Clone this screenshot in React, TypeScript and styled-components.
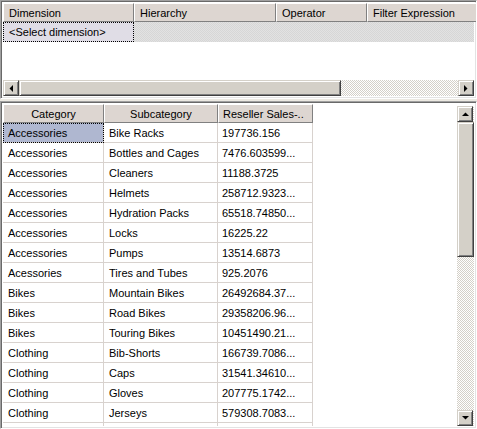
import React, { FC } from "react";
import styled, { createGlobalStyle } from "styled-components";

const GlobalStyle = createGlobalStyle`
  html, body {
    margin: 0;
    padding: 0;
    background: #d4d0c8;
  }
  body {
    font-family: "Liberation Sans", Arial, sans-serif;
    font-size: 11px;
    color: #000;
  }
`;

const dither = `repeating-conic-gradient(#d4d0c8 0 25%, #ffffff 0 50%) 0 0 / 2px 2px`;

const Screen = styled.div`
  width: 477px;
  height: 429px;
  display: flex;
  flex-direction: column;
  gap: 2px;
  background: #ece9e2;
  overflow: hidden;
`;

const Panel = styled.div<{ $height?: number }>`
  box-sizing: border-box;
  height: ${(p) => (p.$height ? `${p.$height}px` : "auto")};
  flex: ${(p) => (p.$height ? "none" : "1")};
  border: 1px solid #a0a0a0;
  border-right-color: #ffffff;
  border-bottom-color: #ffffff;
  box-shadow: inset 1px 1px 0 #696969, inset -1px -1px 0 #e3e3e3;
  padding: 2px;
  background: #fff;
  display: flex;
  flex-direction: column;
  overflow: hidden;
`;

const HeaderRow = styled.div`
  display: flex;
  flex: none;
  height: 19px;
`;

const HeaderCell = styled.div<{ $width: number; $center?: boolean; $pad?: number }>`
  box-sizing: border-box;
  width: ${(p) => p.$width}px;
  flex: none;
  height: 100%;
  background: #ddd6d1;
  border-top: 1px solid #fff;
  border-left: 1px solid #fff;
  border-right: 1px solid #808080;
  border-bottom: 1px solid #808080;
  padding: 0 ${(p) => p.$pad ?? 5}px;
  display: flex;
  align-items: center;
  justify-content: ${(p) => (p.$center ? "center" : "flex-start")};
  white-space: nowrap;
  overflow: hidden;
`;

const FilterRow = styled.div`
  display: flex;
  height: 20px;
  flex: none;
  background: repeating-conic-gradient(#d6d6d6 0 25%, #e2e2e2 0 50%) 0 0 / 2px 2px;
`;

const SelectCell = styled.div`
  box-sizing: border-box;
  width: 131px;
  height: 20px;
  background: #e0dde6;
  border: 1px dotted #000;
  padding: 0 5px;
  line-height: 18px;
`;

const Blank = styled.div`
  flex: 1;
`;

const HScroll = styled.div`
  display: flex;
  height: 16px;
  flex: none;
  background: ${dither};
`;

const ScrollButton = styled.div`
  box-sizing: border-box;
  width: 16px;
  height: 16px;
  flex: none;
  background: #d4d0c8;
  border-top: 1px solid #d4d0c8;
  border-left: 1px solid #d4d0c8;
  border-right: 1px solid #404040;
  border-bottom: 1px solid #404040;
  box-shadow: inset 1px 1px 0 #fff, inset -1px -1px 0 #808080;
  display: flex;
  align-items: center;
  justify-content: center;
`;

const Thumb = styled.div<{ $size: number; $vertical?: boolean }>`
  box-sizing: border-box;
  flex: none;
  width: ${(p) => (p.$vertical ? "100%" : `${p.$size}px`)};
  height: ${(p) => (p.$vertical ? `${p.$size}px` : "100%")};
  background: #d4d0c8;
  border-top: 1px solid #d4d0c8;
  border-left: 1px solid #d4d0c8;
  border-right: 1px solid #404040;
  border-bottom: 1px solid #404040;
  box-shadow: inset 1px 1px 0 #fff, inset -1px -1px 0 #808080;
`;

const Track = styled.div`
  flex: 1;
`;

const GridArea = styled.div`
  flex: 1;
  display: flex;
  overflow: hidden;
`;

const GridBody = styled.div`
  flex: 1;
  display: flex;
  flex-direction: column;
  overflow: hidden;
`;

const Row = styled.div`
  display: flex;
  flex: none;
  height: 20px;
`;

const Cell = styled.div<{ $width: number; $selected?: boolean; $pad?: number }>`
  box-sizing: border-box;
  width: ${(p) => p.$width}px;
  flex: none;
  height: 20px;
  padding: 0 ${(p) => p.$pad ?? 5}px;
  line-height: 20px;
  white-space: nowrap;
  overflow: hidden;
  border-right: 1px solid #d8d2ce;
  border-bottom: 1px solid #d8d2ce;
  background: ${(p) => (p.$selected ? "#afb7d0" : "#fff")};
  outline: ${(p) => (p.$selected ? "1px dotted #000" : "none")};
  outline-offset: -1px;
`;

const VScroll = styled.div`
  width: 17px;
  flex: none;
  display: flex;
  flex-direction: column;
  background: ${dither};
  margin-top: 2px;
`;

const Arrow: FC<{ dir: "left" | "right" | "up" | "down" }> = ({ dir }) => {
  const pts = {
    left: "4,0 4,7 0.5,3.5",
    right: "0,0 0,7 3.5,3.5",
    up: "0,4 7,4 3.5,0.5",
    down: "0,0 7,0 3.5,3.5",
  }[dir];
  const horiz = dir === "left" || dir === "right";
  return (
    <svg width={horiz ? 4 : 7} height={horiz ? 7 : 4} viewBox={horiz ? "0 0 4 7" : "0 0 7 4"}>
      <polygon points={pts} fill="#000" />
    </svg>
  );
};

const rows: [string, string, string][] = [
  ["Accessories", "Bike Racks", "197736.156"],
  ["Accessories", "Bottles and Cages", "7476.603599..."],
  ["Accessories", "Cleaners", "11188.3725"],
  ["Accessories", "Helmets", "258712.9323..."],
  ["Accessories", "Hydration Packs", "65518.74850..."],
  ["Accessories", "Locks", "16225.22"],
  ["Accessories", "Pumps", "13514.6873"],
  ["Acessories", "Tires and Tubes", "925.2076"],
  ["Bikes", "Mountain Bikes", "26492684.37..."],
  ["Bikes", "Road Bikes", "29358206.96..."],
  ["Bikes", "Touring Bikes", "10451490.21..."],
  ["Clothing", "Bib-Shorts", "166739.7086..."],
  ["Clothing", "Caps", "31541.34610..."],
  ["Clothing", "Gloves", "207775.1742..."],
  ["Clothing", "Jerseys", "579308.7083..."],
  ["", "", ""],
];

const App: FC = () => (
  <>
    <GlobalStyle />
    <Screen>
      <Panel $height={99}>
        <HeaderRow>
          <HeaderCell $width={131}>Dimension</HeaderCell>
          <HeaderCell $width={142}>Hierarchy</HeaderCell>
          <HeaderCell $width={91}>Operator</HeaderCell>
          <HeaderCell $width={120}>Filter Expression</HeaderCell>
        </HeaderRow>
        <FilterRow>
          <SelectCell>&lt;Select dimension&gt;</SelectCell>
        </FilterRow>
        <Blank />
        <HScroll>
          <ScrollButton>
            <Arrow dir="left" />
          </ScrollButton>
          <Thumb $size={322} />
          <Track />
          <ScrollButton>
            <Arrow dir="right" />
          </ScrollButton>
        </HScroll>
      </Panel>
      <Panel>
        <GridArea>
          <GridBody>
            <HeaderRow>
              <HeaderCell $width={101} $center>Category</HeaderCell>
              <HeaderCell $width={114} $center>Subcategory</HeaderCell>
              <HeaderCell $width={95} $pad={4}>Reseller Sales-..</HeaderCell>
            </HeaderRow>
            {rows.map(([c, s, v], i) => (
              <Row key={i}>
                <Cell $width={101} $selected={i === 0}>{c}</Cell>
                <Cell $width={114}>{s}</Cell>
                <Cell $width={95} $pad={4}>{v}</Cell>
              </Row>
            ))}
          </GridBody>
          <VScroll>
            <ScrollButton>
              <Arrow dir="up" />
            </ScrollButton>
            <Thumb $vertical $size={135} />
            <Track />
            <ScrollButton>
              <Arrow dir="down" />
            </ScrollButton>
          </VScroll>
        </GridArea>
      </Panel>
    </Screen>
  </>
);

export default App;
